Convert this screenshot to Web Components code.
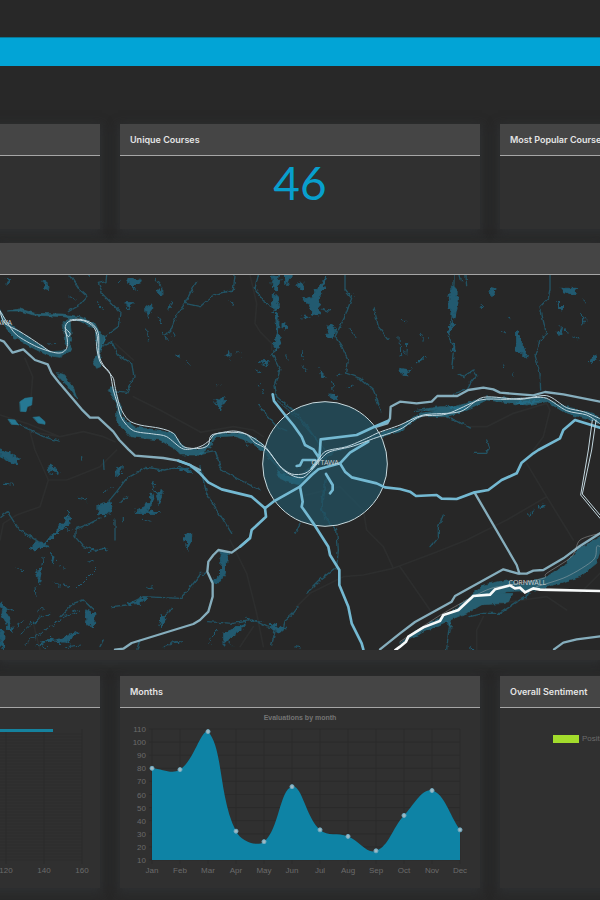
<!DOCTYPE html>
<html lang="en">
<head>
<meta charset="utf-8">
<meta name="viewport" content="width=device-width, initial-scale=1">
<title>Course evaluations</title>
<style>
  body { margin: 0; background: #282828; color: #e4e4e4; font-family: Inter, "Liberation Sans", sans-serif; }
</style>
</head>
<body>
<eval-dashboard></eval-dashboard>

<template id="t-dashboard">
  <style>
    :host { display: block; overflow: hidden; min-height: 100vh; background: #282828; }
    header { padding-top: 37px; }
    .bar { height: 28px; background: #02a4d6; border-top: 1px solid #087896; }
    main { display: grid; gap: 14px; padding-top: 58px; }
    .row { display: grid; grid-template-columns: repeat(3, 60%); gap: 20px; justify-content: center; }
    .low { padding: 2px 0 12px; }
    .stat { min-height: 73px; }
    .count { margin: 0; text-align: center; font: 400 46px/54px Lato, sans-serif; color: #089fcd; }
    ul { list-style: none; margin: 0; padding: 25px 0 0 53px; font: 8px/12px "Liberation Sans", sans-serif; color: #6b6b6b; }
    li { display: flex; align-items: center; gap: 3px; }
    i { width: 26px; height: 8px; background: #a3dc2c; }
  </style>
  <header><div class="bar"></div></header>
  <main>
    <div class="row">
      <dash-panel><div class="stat"></div></dash-panel>
      <dash-panel><span slot="title">Unique Courses</span><div class="stat"><p class="count">46</p></div></dash-panel>
      <dash-panel><span slot="title">Most Popular Course</span><div class="stat"></div></dash-panel>
    </div>
    <dash-panel><region-map></region-map></dash-panel>
    <div class="row low">
      <dash-panel><course-bars></course-bars></dash-panel>
      <dash-panel><span slot="title">Months</span><month-chart></month-chart></dash-panel>
      <dash-panel><span slot="title">Overall Sentiment</span><ul><li><i></i>Positive</li></ul></dash-panel>
    </div>
  </main>
</template>

<template id="t-panel">
  <style>
    :host { display: block; background: #303030; box-shadow: 0 3px 10px 2px rgba(52, 56, 60, .5); }
    h2 { box-sizing: border-box; height: 32px; margin: 0; padding: 0 10px; background: #454545; border-bottom: 1px solid #a6a6a6; font-size: 9px; line-height: 32px; font-weight: 600; white-space: nowrap; }
  </style>
  <h2><slot name="title"></slot></h2>
  <slot></slot>
</template>

<template id="t-map">
  <style>
    :host { display: block; padding-bottom: 10px; }
    svg { display: block; width: 100%; height: auto; background: #272727; }
    path { fill: none; stroke-linejoin: round; stroke-linecap: round; }
    .faint path { stroke: #2d2e2e; stroke-width: 5; }
    .lake path { fill: #205a70; stroke: #205a70; stroke-width: 3; }
    .river path { stroke: #225364; stroke-width: 4; }
    .bright path { fill: #267893; stroke: #267893; stroke-width: 2; }
    .road path { stroke: #86aebd; stroke-width: 7; }
    .near path { stroke: #74b9d2; stroke-width: 8; }
    .line path { stroke: #c3d7df; stroke-width: 3; }
    .thin path { stroke: #b9b9b9; stroke-width: 2; }
    .rail path { stroke: #f7fafa; stroke-width: 8; stroke-linejoin: miter; }
    text { font-family: "Noto Sans", sans-serif; font-size: 21px; fill: #c5cccf; }
  </style>
  <svg viewBox="0 105 1800 1125" role="img" aria-label="Map of evaluations around Ottawa">
    <defs>
      <filter id="shore" x="0" y="0" width="1800" height="1240" filterUnits="userSpaceOnUse">
        <feTurbulence type="fractalNoise" baseFrequency=".07" numOctaves="2" seed="4"/>
        <feDisplacementMap in="SourceGraphic" scale="22" xChannelSelector="R" yChannelSelector="G"/>
      </filter>
      <filter id="bank" x="0" y="0" width="1800" height="1240" filterUnits="userSpaceOnUse">
        <feTurbulence type="fractalNoise" baseFrequency=".06" numOctaves="2" seed="9"/>
        <feDisplacementMap in="SourceGraphic" scale="12" xChannelSelector="R" yChannelSelector="G"/>
      </filter>
    </defs>

    <g class="faint">
      <path d="M75 355L98 410 90 510M0 525L80 550 180 590 250 575 310 590 345 605M180 590L90 575 105 630 145 720 120 800 50 825 10 850 0 900M145 720L200 720 300 680 350 630M345 310L400 360M400 470L480 510 600 575M750 105L770 190 765 250 780 275 815 310 815 330M600 577L700 560 760 570 790 590"/>
      <path d="M1410 560L1460 560 1540 520 1640 490 1650 510 1630 590 1600 630M1580 670L1640 770 1720 900M1640 770L1520 840 1400 900 1300 940 1180 985 1090 1005 1030 1010 930 1060 890 1100M1200 980L1290 1110M1180 985L1150 920 1100 870 1090 810 1020 740 900 770M690 900L740 1000 770 1120 790 1220M720 1220L760 1160M1430 1230L1430 1170 1450 1130M1500 1090L1640 1070 1700 1110M1740 1060L1800 1000M1940 670L1970 760M100 1150L120 1230"/>
    </g>

    <g class="river" filter="url(#bank)">
      <path d="M210 105L240 150 262 170 240 195 205 215M320 105L318 125 295 130 310 165 360 215 355 260 320 285 300 330M465 115L485 140 485 160M590 125L570 160 555 190 600 200M555 190L530 225 515 265 495 285M305 320L335 305 355 345 395 370 402 410 380 460 345 455M35 545L90 570 130 590 175 603"/>
      <path d="M705 105L700 150 640 165 600 200M775 105L765 145 790 185 830 210M830 330L815 340 840 390 825 440 830 470M1035 105L1035 150 1055 175 1035 230 1005 290 1025 320 1045 360 1040 400 1080 415 1120 450 1145 515M1122 205L1135 260 1165 298M776 495L800 525 830 560 860 572M830 470L900 530 950 600 975 630"/>
      <path d="M1362 105L1362 130 1355 240 1345 290 1362 320 1355 385M1380 105L1385 125M1398 105L1400 140M1650 105L1650 150 1645 175 1620 200 1640 285 1620 300 1605 345 1620 400 1622 450M1375 400L1390 410 1420 390 1430 405 1410 430 1400 450 1360 460M1340 530L1375 545 1410 565M1460 600L1468 620 1460 640 1420 640"/>
      <path d="M0 832L22 815 45 850 60 870 115 905 145 920M300 834L270 850 225 868 225 890 250 920 285 930 320 925M325 785L350 755 380 715 440 682 490 690 540 682 570 695M335 1100L380 1095 430 1070 540 1075 565 1050 600 1005M345 840L345 900M370 830L370 845M360 790L380 770M310 660L312 685M245 650L245 660M515 1105L490 1130 480 1160M300 1220L310 1200M410 1230L420 1200M180 1130L220 1090 250 1080 280 1110"/>
      <path d="M600 640L645 632 665 690 720 720 780 750M600 680L620 760 670 840 695 880M980 695L965 780 970 830 1010 870 1015 930 1010 980 960 1020 920 1060M900 850L885 880M895 1100L880 1120 855 1140 850 1170 800 1160 760 1140 700 1150 620 1145M815 1215L825 1175M1330 825L1315 860 1315 890 1290 920M1340 1230L1345 1180 1350 1150M1410 1130L1450 1120 1500 1120 1530 1100 1590 1060"/>
    </g>

    <g class="lake" filter="url(#shore)">
      <path d="M15 118L30 122 38 118 25 130ZM133 122L140 122 144 145 135 143ZM265 105L275 112M210 170L225 180M290 190L310 212M385 115L415 118 420 132 395 140 385 128ZM400 145L410 150M355 128L362 124M375 188L398 188 390 207ZM470 150L485 150 485 165 475 160ZM515 185L510 205M440 200L455 192 455 205 445 230ZM475 230L482 250M440 270L447 300M490 280L500 298M515 275L525 290M525 345L540 350M560 368L570 380M145 312L170 310"/>
      <path d="M815 105L838 108 832 150 820 148ZM818 165L832 170 835 200 820 215ZM855 105L875 105 865 130 855 128ZM890 135L912 125 905 150ZM905 180L935 170 980 110 970 150 955 180 960 225 940 222 925 190ZM900 235L915 228 930 235M827 220L838 225 835 285 842 310 830 330 823 310 832 280ZM845 255L858 250 855 268M965 205L990 215M990 250L1008 262 998 295 980 290 985 270ZM1045 260L1068 290M1050 160L1060 165M690 180L700 195M675 345L690 335 690 355M715 335L720 345M775 365L805 365 800 375M770 390L790 400M857 345L862 360M905 335L910 355M910 380L920 392M960 385L965 410 980 415M995 415L1000 455M1010 408L1020 405M1040 440L1058 435M990 462L1010 465 1005 480 992 475ZM645 485L675 470 665 510 655 500ZM650 440L660 436M775 430L780 432M785 455L790 458"/>
      <path d="M1355 140L1370 150 1375 180 1365 235 1352 225 1345 180ZM1270 145L1285 148 1280 170 1268 160ZM1240 198L1254 200M1378 230L1387 235M1482 145L1530 145 1520 165 1490 155M1470 185L1490 205 1482 215M1750 180L1758 190M1682 145L1730 145 1720 165 1690 155M1670 185L1690 205 1682 215M1830 220L1835 240" visibility="hidden"/>
      <path d="M1355 140L1370 150 1375 180 1365 235 1352 225 1345 180ZM1355 240L1370 255 1345 265 1352 290M1470 145L1485 148 1480 170 1468 160ZM1440 198L1454 200M1524 230L1530 233M1682 145L1730 145 1720 165 1690 155M1670 185L1690 205 1682 215M1748 180L1758 190M1745 220L1755 240 1748 255M1680 260L1687 265 1680 290 1675 275M1695 268L1698 280M1720 290L1735 297M1510 275L1520 280M1550 270L1560 300 1570 320 1580 355 1565 340 1545 335 1550 310ZM1765 365L1790 345 1795 355 1775 368M1360 312L1365 325 1352 340M1200 290L1202 345M1205 240L1215 245M1220 310L1217 345M1262 280L1270 300M1280 290L1285 295M1245 375L1265 355 1278 350M1200 385L1230 390 1222 408 1205 402ZM1508 372L1514 380M1535 400L1540 405M1240 515L1290 510M1340 495L1360 510 1400 505M1540 495L1560 485 1620 485"/>
      <path d="M0 630L30 638 60 658 50 672 20 660 0 650ZM145 682L160 675 178 700 150 695ZM15 730L40 733M310 755L340 742M235 775L260 782M295 795L330 785 335 810 315 828 295 820ZM348 682L370 680 366 696 352 706ZM455 725L470 760 490 755 475 790M455 760L460 785 440 810 478 820 400 820 440 800 450 780ZM425 838L450 840M520 685L570 685 575 700M550 885L575 880 575 900 560 930M205 815L210 850 175 875 120 930 150 890 190 850M90 930L110 900 145 920M220 870L195 865M150 940L165 950 160 975M130 950L125 980 110 1000 120 1030M105 1040L108 1070M50 985L65 995M180 980L195 985M160 1020L180 1040M190 1035L210 1040M230 1045L290 985M265 935L290 930M265 970L280 960M310 925L325 928"/>
      <path d="M0 1090L15 1100 40 1180 25 1165 0 1105ZM15 1100L40 1110M0 1170L12 1180 10 1230 0 1215ZM40 1165L75 1140M60 1185L120 1130M75 1210L180 1140M105 1220L150 1195 190 1210 235 1175M120 1210L140 1220M180 1200L210 1210M200 1220L245 1215M110 1115L130 1105M90 1150L150 1120M255 1110L285 1120 280 1160 260 1150ZM190 1130L240 1110M380 1092L440 1072 420 1090ZM440 1045L460 1040M480 1120L495 1140 480 1170M495 1220L520 1205M520 1205L550 1210M510 1215L530 1205"/>
      <path d="M665 935L685 940 675 1000 650 1035 635 1020 660 1010ZM600 1000L620 1000M670 1180L740 1150 725 1170 690 1195 670 1215ZM625 1210L650 1170 640 1190M805 1150L855 1165 840 1180ZM880 1120L870 1130M740 1135L790 1145M885 1220L900 1225M685 1205L695 1215"/>
      <path d="M1585 825L1605 810M1615 800L1630 792 1632 805M1415 1220L1418 1230M1340 1145L1355 1165"/>
    </g>
    <g class="bright">
      <path d="M60 485L75 475 97 472 95 495 82 500 78 515 62 514ZM100 532L118 530 135 545 135 553 115 549ZM25 538L45 540 55 554 35 553Z"/>
    </g>

    <g class="bright" filter="url(#bank)" opacity=".68">
      <path d="M0 212L20 245 60 275 110 310 155 335 190 332 210 320 215 330 180 352 145 347 100 325 40 290 10 255ZM20 213L60 213 100 225 190 230 240 238 240 230 190 222 105 220 60 207ZM190 245L210 237 215 300 205 325 195 310ZM205 235L240 230 285 250 300 280 318 295 300 330 302 380 290 385 280 365 292 345 285 265 240 244ZM170 398L190 403 220 445 233 480 205 440 180 415ZM325 450L340 440 365 500 365 530 400 560 470 570 520 580 560 628 600 628 600 645 545 640 480 600 390 590 350 545 350 490Z"/>
      <path d="M530 630L600 628 635 605 640 583 710 577 760 592 800 625 830 670 870 705 905 705 935 680 970 640 1000 627 1060 612 1130 582 1200 560 1260 520 1330 510 1400 490 1460 470 1540 475 1620 470 1700 500 1780 520 1800 535 1800 550 1750 535 1690 515 1640 485 1580 495 1460 480 1400 510 1340 530 1260 530 1200 575 1120 596 1060 622 1000 635 960 670 920 712 880 716 840 690 790 635 750 605 700 588 650 590 635 615 600 645 540 645Z"/>
      <path d="M720 575L745 620 735 595Z"/>
      <path d="M1200 1210L1260 1165 1350 1120 1410 1070 1450 1035 1520 1020 1560 1035 1640 1010 1700 970 1730 930 1800 890 1800 930 1790 970 1740 1010 1660 1035 1610 1050 1520 1055 1460 1085 1410 1115 1350 1140 1240 1190Z" stroke-width="5"/>
      <path d="M1330 1140L1355 1165 1350 1140ZM1440 1060L1540 1060 1520 1090 1430 1095ZM1255 510L1320 500 1390 500 1370 515Z"/>
    </g>

    <circle cx="975" cy="672" r="187" fill="#23505f" fill-opacity=".78" stroke="#c9dade" stroke-width="3"/>
    <g class="bright" filter="url(#bank)" opacity=".5"><path d="M830 690L850 700 880 712 920 708 900 735 860 725 840 715Z"/></g>
    <g class="river" filter="url(#bank)" opacity=".8"><path d="M830 480L900 540 950 600 980 660M980 720L970 760 965 810 990 850M800 620L830 680 860 705"/></g>

    <g class="road">
      <path d="M0 300L12 305 38 338 70 328 105 360 143 373 155 400 175 425 245 508 270 533 295 533 340 575 358 600 385 628 405 647 490 654 535 662 570 675 600 690"/>
      <path d="M345 1229L370 1226 395 1209 580 1152 600 1140 625 1115 638 1070 638 1030 622 995 625 965 640 945 655 930 695 938 720 920 748 895"/>
      <path d="M1130 560L1162 550 1170 535 1172 500 1200 485 1250 490 1295 485 1312 468 1372 468 1405 450 1450 443 1480 448 1500 458 1600 466 1635 456 1690 463 1800 485"/>
      <path d="M1425 760L1550 975 1558 1000"/>
      <path d="M1662 1228L1690 1208 1730 1198 1800 1189"/>
      <path d="M1140 1228L1200 1180 1245 1146 1355 1085 1365 1068 1510 988 1555 1001 1580 1001 1600 992 1630 990 1690 955 1740 918 1800 880"/>
    </g>
    <g class="near">
      <path d="M818 463L822 483 855 525 880 555 905 590 915 615 940 628 958 655 962 598 1070 585 1120 562 1165 542"/>
      <path d="M600 690L615 640" visibility="hidden"/>
      <path d="M600 640L665 690 750 717 795 755 820 735" visibility="hidden"/>
      <path d="M535 662L570 675 600 700 625 727 665 748 755 770 795 805 820 785 900 740 935 705 955 688 1020 670 1035 695 1055 712 1130 730 1155 742 1200 747 1230 755 1248 768 1310 765 1325 776 1370 777 1420 758 1465 750 1505 720 1550 700 1565 668 1600 640 1615 630 1680 595 1690 570 1725 540 1800 563"/>
      <path d="M795 805L798 830 755 870 750 895 720 920M900 740L908 785 905 800 940 850 985 920 990 945 1018 990 1018 1035 1045 1100 1055 1150 1085 1210 1090 1228" stroke-width="7"/>
      <path d="M1020 670L1050 638 1105 605M890 678L900 676 908 660 945 660M958 655L935 685M978 702L998 735 998 750 990 760" stroke-width="7"/>
    </g>
    <g class="line">
      <path data-smooth d="M0 212L20 245 50 285 110 320 160 337 185 338 200 325 202 300 196 260 210 243 250 242 280 260 292 290 290 320 300 365 325 395 340 415 345 440 360 500 385 540 420 555 480 565 520 580 550 620 600 625 625 615 635 585 690 577 740 583 795 620 840 678 875 702 915 700 945 675 975 635 1040 620 1100 595 1135 578 1200 555 1270 525 1380 515 1450 472 1560 478 1640 467 1700 503 1750 515 1798 535"/>
      <path data-smooth d="M0 215L15 250 60 275 110 307 150 335M195 265L210 280 205 290 195 275M210 240L240 238 275 250 295 280 297 345 310 375 330 400 340 450 352 490 365 535 400 572 460 582 500 590 550 627 600 620 630 600 645 583 700 573 740 583 765 608 800 628 845 685 880 708 910 712 940 685 965 655 990 635 1060 618 1120 596 1200 568 1260 530 1340 522 1440 480 1520 478 1600 473 1640 475 1700 512 1760 525 1798 550"/>
      <path d="M1788 540L1775 630 1747 762 1800 825M1777 540L1765 630 1742 765 1800 835" stroke-width="2"/>
    </g>
    <g class="thin">
      <path data-smooth d="M1200 1205L1330 1120 1460 1050 1530 1035 1630 1015 1640 1000 1715 950 1740 900 1800 880M1610 1040L1700 1010 1780 960 1790 920 1800 920" opacity=".65"/>
    </g>
    <g class="rail">
      <path d="M1186 1230L1200 1220 1218 1205 1225 1190 1270 1162 1320 1143 1330 1125 1375 1110 1420 1068 1470 1064 1485 1048 1530 1036 1545 1045 1560 1043 1575 1057 1600 1045 1620 1049 1800 1053"/>
    </g>
    <text x="36" y="256" text-anchor="end">PETAWAWA</text>
    <text x="975" y="676" text-anchor="middle">OTTAWA</text>
    <text x="1582" y="1035" text-anchor="middle">CORNWALL</text>
  </svg>
</template>

<script>
  const chartStyle = `<style>
    :host { display: block; }
    svg { display: block; width: 100%; height: auto; }
    text { font-family: "Liberation Sans", Arial, sans-serif; font-size: 8px; fill: #6b6b6b; }
    .title { font-size: 7px; font-weight: 700; fill: #747474; }
    .grid { stroke: #2b2b2b; stroke-width: 1; }
  </style>`;

  function fromTemplate(id) {
    return class extends HTMLElement {
      constructor() {
        super();
        this.attachShadow({ mode: "open" }).append(document.getElementById(id).content.cloneNode(true));
      }
    };
  }

  // Rounds the corners of a polyline by running a curve through its points.
  function smooth(d) {
    return d.split("M").filter(Boolean).map(part => {
      const n = part.match(/[\d.]+/g).map(Number), p = [];
      for (let i = 0; i < n.length; i += 2) p.push([n[i], n[i + 1]]);
      let out = "M" + p[0];
      for (let i = 0; i < p.length - 1; i++) {
        const a = p[i - 1] || p[i], b = p[i], c = p[i + 1], e = p[i + 2] || c;
        out += `C${b[0] + (c[0] - a[0]) / 7} ${b[1] + (c[1] - a[1]) / 7} ${c[0] - (e[0] - b[0]) / 7} ${c[1] - (e[1] - b[1]) / 7} ${c}`;
      }
      return out;
    }).join("");
  }

  class RegionMap extends fromTemplate("t-map") {
    constructor() {
      super();
      this.shadowRoot.querySelectorAll("[visibility=hidden]").forEach(p => p.remove());
      this.shadowRoot.querySelectorAll("[data-smooth]").forEach(p => p.setAttribute("d", smooth(p.getAttribute("d"))));
    }
  }

  class MonthChart extends HTMLElement {
    constructor() {
      super();
      const names = ["Jan", "Feb", "Mar", "Apr", "May", "Jun", "Jul", "Aug", "Sep", "Oct", "Nov", "Dec"];
      const values = [80, 79, 108, 32, 24, 66, 33, 28, 17, 44, 63, 33];
      const top = 21, bottom = 152, left = 32, step = 28;
      const yOf = v => bottom - (v - 10) * (bottom - top) / 100;
      const pts = values.map((v, i) => [left + i * step, yOf(v)]);
      const right = pts[11][0];
      const clamp = y => Math.min(bottom, Math.max(top, y));
      const handles = pts.map((p, i) => {
        const a = pts[i - 1] || p, b = pts[i + 1] || p;
        const d1 = Math.hypot(p[0] - a[0], p[1] - a[1]), d2 = Math.hypot(b[0] - p[0], b[1] - p[1]);
        const f1 = .4 * d1 / (d1 + d2), f2 = .4 * d2 / (d1 + d2);
        return [[p[0] - f1 * (b[0] - a[0]), clamp(p[1] - f1 * (b[1] - a[1]))],
                [p[0] + f2 * (b[0] - a[0]), clamp(p[1] + f2 * (b[1] - a[1]))]];
      });
      let d = `M${left} ${bottom}L${pts[0]}`;
      for (let i = 1; i < pts.length; i++) d += `C${handles[i - 1][1]} ${handles[i][0]} ${pts[i]}`;
      d += `L${right} ${bottom}Z`;
      let grid = "", labels = "";
      for (let v = 10; v <= 110; v += 10) {
        grid += `<path class="grid" d="M${left - 3} ${yOf(v)}H${right}"/>`;
        labels += `<text x="26" y="${yOf(v) + 3}" text-anchor="end">${v}</text>`;
      }
      pts.forEach((p, i) => {
        grid += `<path class="grid" d="M${p[0]} ${top}V${bottom + 4}"/>`;
        labels += `<text x="${p[0]}" y="165" text-anchor="middle">${names[i]}</text>`;
      });
      const dots = pts.map(p => `<circle cx="${p[0]}" cy="${p[1]}" r="2" fill="#9fb9c3" stroke="#6fabc2" stroke-width="1"/>`).join("");
      this.attachShadow({ mode: "open" }).innerHTML = chartStyle +
        `<svg viewBox="0 0 360 180" role="img" aria-label="Evaluations by month">
          <text class="title" x="180" y="12" text-anchor="middle">Evaluations by month</text>
          ${grid}<path d="${d}" fill="#0e83a5"/>${dots}${labels}
        </svg>`;
    }
  }

  class CourseBars extends HTMLElement {
    constructor() {
      super();
      let grid = "";
      for (let y = 26; y <= 152; y += 3) grid += `<path d="M38 ${y}H342" stroke="#2c2c2c"/>`;
      [266, 304, 342].forEach(x => { grid += `<path class="grid" d="M${x} 21V156"/>`; });
      this.attachShadow({ mode: "open" }).innerHTML = chartStyle +
        `<svg viewBox="0 0 360 180" role="img" aria-label="Evaluations by course">
          ${grid}<path d="M38 21H313V24H38Z" fill="#15829e"/>
          <text x="266" y="165" text-anchor="middle">120</text>
          <text x="304" y="165" text-anchor="middle">140</text>
          <text x="342" y="165" text-anchor="middle">160</text>
        </svg>`;
    }
  }

  customElements.define("dash-panel", fromTemplate("t-panel"));
  customElements.define("region-map", RegionMap);
  customElements.define("month-chart", MonthChart);
  customElements.define("course-bars", CourseBars);
  customElements.define("eval-dashboard", fromTemplate("t-dashboard"));
</script>
</body>
</html>
